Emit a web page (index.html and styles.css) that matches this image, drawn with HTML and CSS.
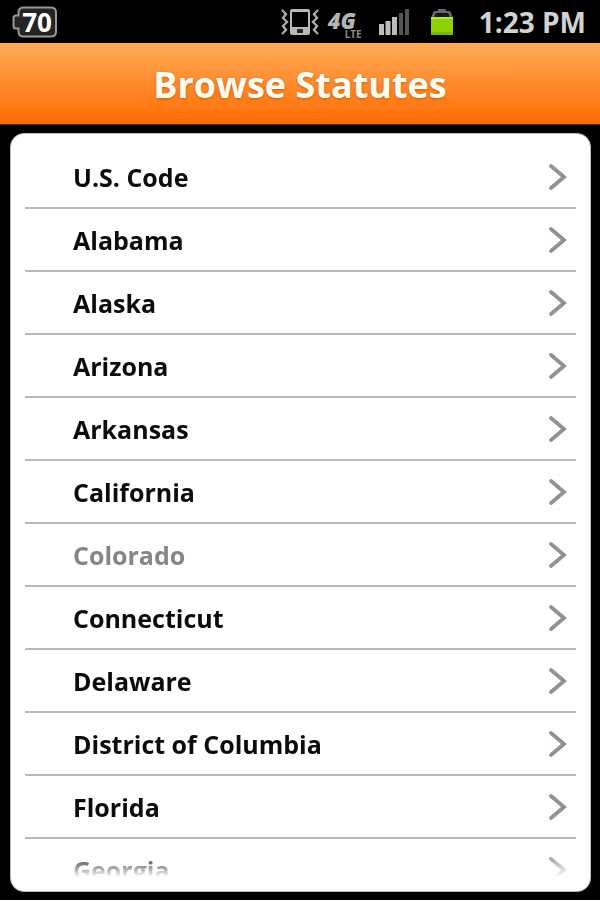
FILE: index.html
```html
<!DOCTYPE html>
<html lang="en">

<head>
  <meta charset="utf-8">
  <meta name="viewport" content="width=device-width, initial-scale=1">
  <title>Browse Statutes</title>
  <link rel="stylesheet" href="styles.css">
</head>

<body>

  <svg class="defs" aria-hidden="true">
    <symbol id="chevron" viewBox="0 0 20 30">
      <path d="M3 4 L16 15 L3 26" fill="none" stroke="#929292" stroke-width="3.8" stroke-linecap="round"/>
    </symbol>
  </svg>

  <div class="statusbar">
    <div class="battery-level">
      <svg class="battery-outline" viewBox="0 0 46 32" aria-hidden="true">
        <path d="M11 1.5H39Q44 1.5 44 6.500V25.500Q44 30.500 39 30.500H11Q6.500 30.500 6.500 25V22.500H4Q1.500 22.500 1.500 20V12Q1.500 9.500 4 9.500H6.500V7Q6.500 1.500 11 1.500Z" fill="#242424" stroke="#999" stroke-width="2"/>
      </svg>
      <span>70</span>
    </div>

    <div class="status-icons">
      <svg width="40" height="28" viewBox="0 0 40 28" aria-hidden="true">
        <path d="M2 2L6 6L3 10L7 14L3 18L6 22L2 26M38 2L34 6L37 10L33 14L37 18L34 22L38 26" fill="none" stroke="#aaa" stroke-width="2.4"/>
        <path d="M12 1H28Q30 1 30 3V25Q30 27 28 27H12Q10 27 10 25V3Q10 1 12 1ZM12 4V19H28V4Z" fill="#b8b8b8" fill-rule="evenodd"/>
        <rect x="17" y="21" width="6" height="4" rx="1" fill="#222"/>
      </svg>
      <div class="network">
        <span class="network-gen">4G</span>
        <span class="network-type">LTE</span>
      </div>
      <svg class="signal" width="32" height="26" viewBox="0 0 32 26" aria-hidden="true">
        <path d="M0 15h5v11H0zM6.500 12h5v14h-5zM13 8h5v18h-5z" fill="#bcbcbc"/>
        <path d="M20 4h4v22h-4zM26 0h4v26h-4z" fill="#555"/>
      </svg>
      <svg class="battery" width="22" height="28" viewBox="0 0 22 28" aria-hidden="true">
        <path d="M7 1H15V3H19L21 7V26H1V7L3 3H7Z" fill="#66696f"/>
        <path d="M5 5H17L19 9H3Z" fill="#16181c"/>
        <path d="M0 9H22V26Q22 27 21 27H1Q0 27 0 26Z" fill="#8fd003"/>
        <path d="M0 9H22V11H0Z" fill="#b5e34b"/>
        <path d="M0 24H22V26Q22 27 21 27H1Q0 27 0 26Z" fill="#7db800"/>
      </svg>
      <span class="clock">1:23 PM</span>
    </div>
  </div>

  <header class="titlebar">
    <h1>Browse Statutes</h1>
  </header>

  <main class="panel">
    <ul class="statutes">
      <li><a href="#">U.S. Code <svg class="chevron"><use href="#chevron"/></svg></a></li>
      <li><a href="#">Alabama <svg class="chevron"><use href="#chevron"/></svg></a></li>
      <li><a href="#">Alaska <svg class="chevron"><use href="#chevron"/></svg></a></li>
      <li><a href="#">Arizona <svg class="chevron"><use href="#chevron"/></svg></a></li>
      <li><a href="#">Arkansas <svg class="chevron"><use href="#chevron"/></svg></a></li>
      <li><a href="#">California <svg class="chevron"><use href="#chevron"/></svg></a></li>
      <li><a href="#" class="disabled">Colorado <svg class="chevron"><use href="#chevron"/></svg></a></li>
      <li><a href="#">Connecticut <svg class="chevron"><use href="#chevron"/></svg></a></li>
      <li><a href="#">Delaware <svg class="chevron"><use href="#chevron"/></svg></a></li>
      <li><a href="#">District of Columbia <svg class="chevron"><use href="#chevron"/></svg></a></li>
      <li><a href="#">Florida <svg class="chevron"><use href="#chevron"/></svg></a></li>
      <li><a href="#">Georgia <svg class="chevron"><use href="#chevron"/></svg></a></li>
    </ul>
  </main>

</body>

</html>
```

FILE: styles.css
```css
* {
  box-sizing: border-box;
}

body {
  display: flex;
  flex-direction: column;
  height: 100vh;
  margin: 0;
  background-color: black;
  font-family: "Open Sans", "Noto Sans", sans-serif;
  font-weight: bold;
}

.defs {
  position: absolute;
  width: 0;
  height: 0;
}

/* Phone status bar */
.statusbar {
  display: flex;
  justify-content: space-between;
  align-items: center;
  flex: none;
  height: 43px;
  padding: 0 14px 0 12px;
  color: #d2d2d2;
}

.battery-level {
  display: grid;
  place-items: center;
  color: white;
  font-size: 26px;
  line-height: 28px;
}

.battery-level > * {
  grid-area: 1 / 1;
}

.battery-level span {
  padding-left: 4px;
}

.battery-outline {
  width: 46px;
  height: 32px;
}

.status-icons {
  display: flex;
  align-items: center;
}

.network {
  display: flex;
  flex-direction: column;
  width: 34px;
  margin-left: 8px;
  padding-top: 4px;
  color: #b4b4b4;
}

.network-gen {
  font-size: 22px;
  font-style: italic;
  font-weight: 800;
  line-height: 20px;
}

.network-type {
  align-self: flex-end;
  color: #8c8c8c;
  font-size: 10px;
  line-height: 8px;
}

.signal {
  margin-left: 17px;
}

.battery {
  margin-left: 20px;
}

.clock {
  margin-left: 26px;
  font-size: 28px;
}

/* Orange title bar */
.titlebar {
  flex: none;
  height: 82px;
  background: linear-gradient(#ffab58, #ff6c04);
  border-bottom: 1px solid #5a2600;
}

.titlebar h1 {
  margin: 0;
  color: #fffbee;
  font-size: 36px;
  line-height: 84px;
  text-align: center;
  text-shadow: 0 1px 3px rgba(120, 70, 20, 0.5);
}

/* White panel with the scrolling list */
.panel {
  flex: 1;
  display: flex;
  min-height: 0;
  margin: 8px 9px 8px 10px;
  padding: 12px 14px 14px;
  background-color: white;
  border: 1px solid #bbb;
  border-radius: 14px;
}

.statutes {
  flex: 1;
  margin: 0;
  padding: 0;
  list-style: none;
  overflow-y: auto;
  scrollbar-width: none;
  -webkit-mask-image: linear-gradient(to top, transparent, black 24px);
  mask-image: linear-gradient(to top, transparent, black 24px);
}

.statutes li {
  border-bottom: 2px solid #b8b8b8;
}

.statutes a {
  display: flex;
  justify-content: space-between;
  align-items: center;
  height: 61px;
  padding: 0 8px 0 48px;
  color: #0c0c0c;
  font-size: 25px;
  text-decoration: none;
}

.statutes a.disabled {
  color: #868686;
}

.chevron {
  width: 20px;
  height: 30px;
}
```
